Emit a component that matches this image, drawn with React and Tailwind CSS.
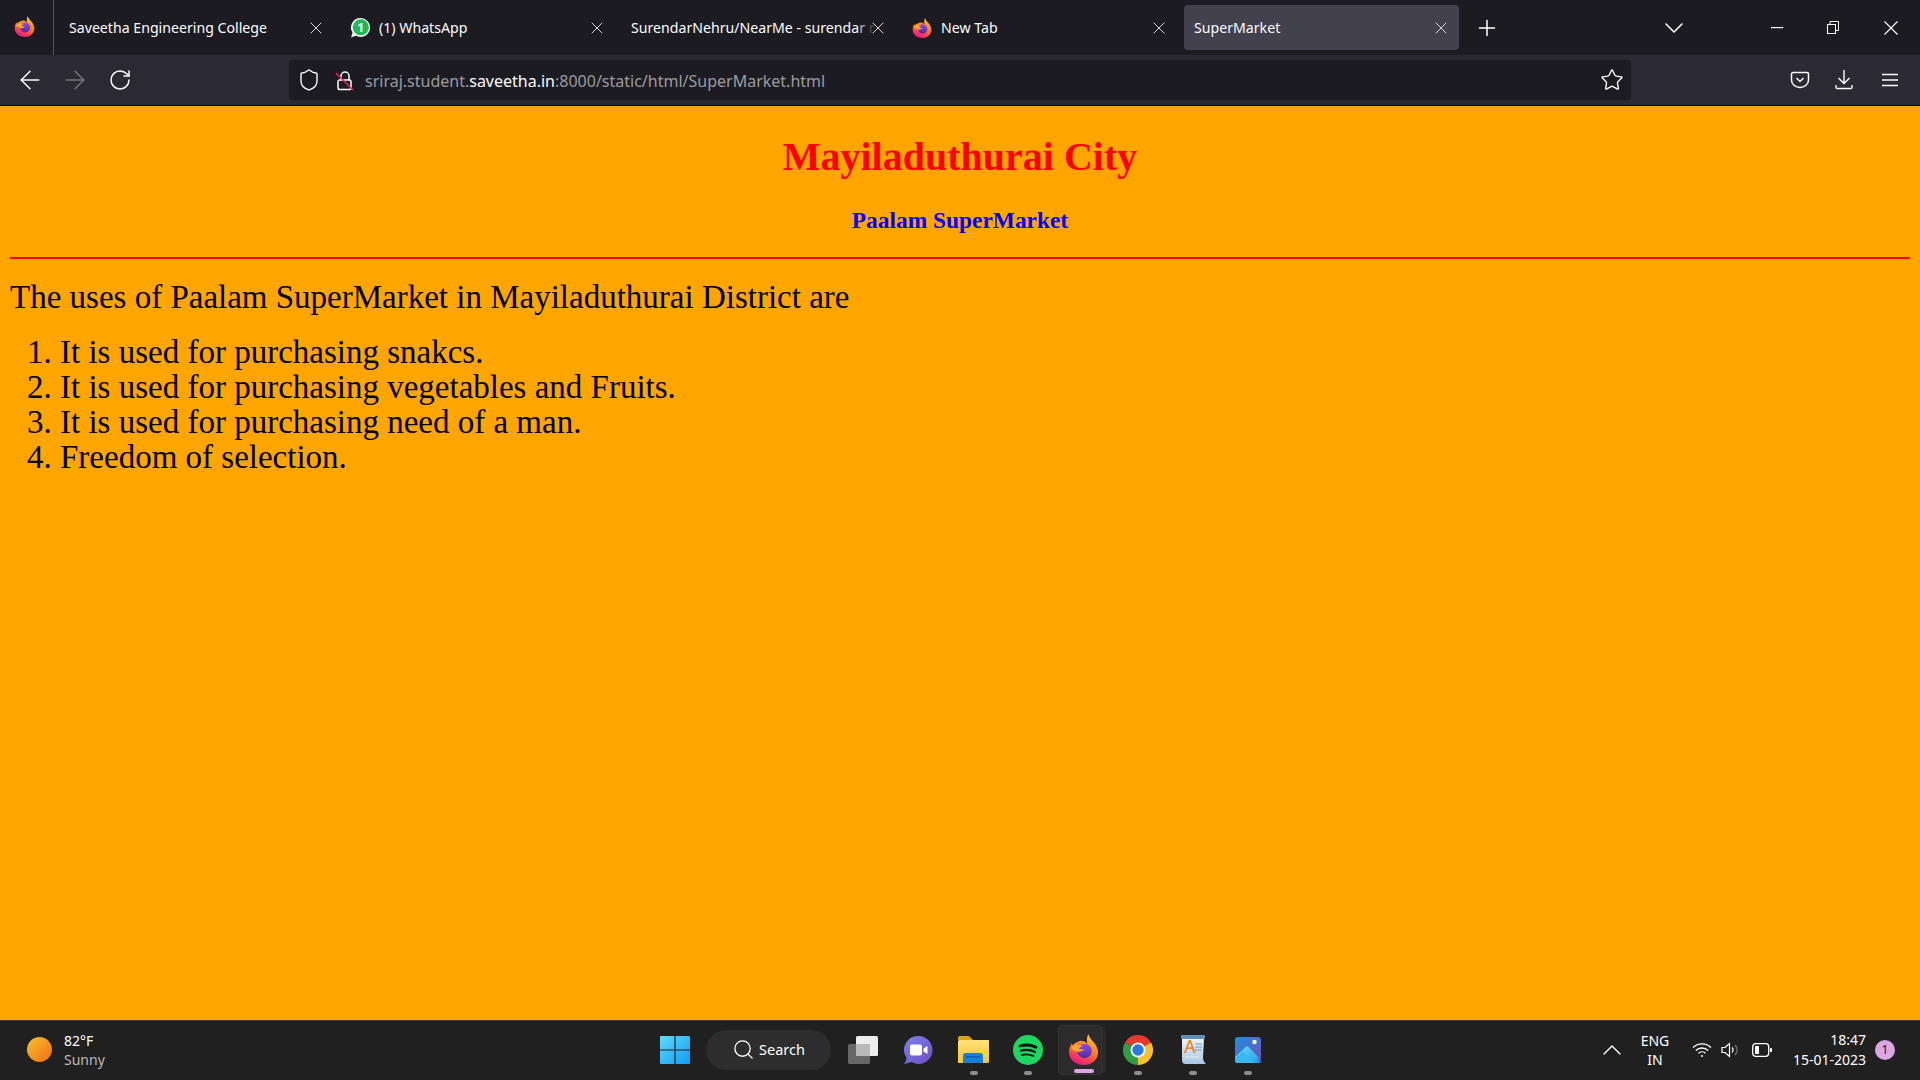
import React from "react";
import {
  ArrowLeft,
  ArrowRight,
  ChevronDown,
  ChevronUp,
  Plus,
  RotateCw,
  Search,
  Shield,
  Star,
  X,
} from "lucide-react";

const uiFont = "font-['Noto_Sans','Open_Sans',sans-serif]";
const pageFont = "font-['Liberation_Serif',serif]";

function FirefoxIcon({ size = 20 }) {
  return (
    <svg width={size} height={size} viewBox="0 0 32 32">
      <defs>
        <linearGradient id="ffBody" x1="0.8" y1="0" x2="0.35" y2="1">
          <stop offset="0" stopColor="#ffd02e" />
          <stop offset="0.5" stopColor="#ff7a1f" />
          <stop offset="0.8" stopColor="#ff3a5a" />
          <stop offset="1" stopColor="#e0168c" />
        </linearGradient>
        <linearGradient id="ffCore" x1="0.5" y1="0" x2="0.5" y2="1">
          <stop offset="0" stopColor="#8f4de8" />
          <stop offset="1" stopColor="#4a2aa6" />
        </linearGradient>
      </defs>
      <path d="M21 0c.5 3 3 5.500 5.500 8.500 2.500 3 4.500 6.500 4.500 10.500 0 7.500-6.500 13-15 13S1 26 1 18c0-3 1-6 3-8.500.5 1.500 1 2.500 2 3 1-3 4-5 7-5.500 3 0 5 1 7 3-1-3.500-.5-7 1-10z" fill="url(#ffBody)" />
      <circle cx="17" cy="17.500" r="7.500" fill="url(#ffCore)" />
      <path d="M3 16c1-3.500 3-6 6-7.500C8 10 8.200 11 9.500 11.500c1.500.5 3.500.5 5.500 0-1 1.500-2.500 2.500-4 3 1 1.500 3.500 2 6 1-1.500 2.500-5 3.500-8 2.500-2-.7-4-1.500-6-2z" fill="#ffa62b" />
    </svg>
  );
}

function WhatsAppIcon() {
  return (
    <svg width="21" height="22" viewBox="0 0 21 22">
      <path d="M10.500 1a9.500 9.500 0 1 1-4.600 17.800L1 20.500l1.500-4.800A9.500 9.500 0 0 1 10.500 1z" fill="#e8f5ee" />
      <circle cx="10.800" cy="10.300" r="8" fill="#1fb954" />
      <text x="10.800" y="14.500" textAnchor="middle" fontSize="12" fontWeight="700" fontFamily="Noto Sans" fill="#fff">
        1
      </text>
    </svg>
  );
}

function Tab({ icon, children, active }) {
  return (
    <div
      className={`mr-[6px] flex h-[45px] w-[275px] shrink-0 items-center rounded-[4px] pl-[10px] pr-[8px] ${
        active ? "ml-[1px] bg-[#42414d]" : ""
      }`}
    >
      {icon && <span className="mr-[7px] flex w-[22px] shrink-0 items-center">{icon}</span>}
      <span className="min-w-0 flex-1 whitespace-nowrap pt-[1px] text-[14.15px] text-[#fbfbfe]">{children}</span>
      <X size={20} strokeWidth={1.2} className="shrink-0 text-[#d5d5da]" />
    </div>
  );
}

function TitleBar() {
  return (
    <div className="flex h-[55px] shrink-0 items-center bg-[#1c1b22] text-white">
      <div className="flex h-full w-[54px] shrink-0 items-center justify-center border-r border-[#55555c] pb-[3px] pr-[4px]">
        <FirefoxIcon size={21} />
      </div>
      <div className="ml-[5px] flex items-center">
        <Tab>Saveetha Engineering College</Tab>
        <Tab icon={<WhatsAppIcon />}>(1) WhatsApp</Tab>
        <Tab>
          SurendarNehru/NearMe - surenda<span className="opacity-70">r</span> <span className="opacity-20">r</span>
        </Tab>
        <Tab icon={<FirefoxIcon size={20} />}>New Tab</Tab>
        <Tab active>SuperMarket</Tab>
      </div>
      <Plus size={26} strokeWidth={1.4} className="ml-[9px] shrink-0" />
      <ChevronDown size={32} strokeWidth={1.2} className="ml-[158px] shrink-0" />
      <div className="ml-auto flex items-center pr-[22px]">
        <svg width="12" height="2" viewBox="0 0 12 2" className="mr-[44px]">
          <rect width="12" height="1.200" fill="#fff" />
        </svg>
        <svg width="12" height="13" viewBox="0 0 12 13" fill="none" stroke="#fff" strokeWidth="1" className="mr-[45px]">
          <rect x="0.500" y="3.500" width="8" height="9" fill="#1c1b22" />
          <path d="M3 3.500V.5h8.500v9H8.500" />
        </svg>
        <svg width="14" height="14" viewBox="0 0 14 14" stroke="#fff" strokeWidth="1.100">
          <path d="M.5.5l13 13M13.500.5l-13 13" />
        </svg>
      </div>
    </div>
  );
}

function ToolBar() {
  return (
    <div className="flex h-[50px] shrink-0 items-center bg-[#2b2a33] text-[#fbfbfe]">
      <ArrowLeft size={30} strokeWidth={1.2} className="ml-[15px] shrink-0" />
      <ArrowRight size={30} strokeWidth={1.2} className="ml-[15px] shrink-0 text-[#75747b]" />
      <RotateCw size={24} strokeWidth={1.5} className="ml-[18px] shrink-0" />
      <div className="ml-[157px] flex h-[40px] w-[1342px] shrink-0 items-center rounded-[4px] bg-[#1c1b22] pl-[8px] pr-[7px]">
        <Shield size={24} strokeWidth={1.4} className="shrink-0" />
        <svg width="20" height="21" viewBox="0 0 20 21" fill="none" className="ml-[14px] shrink-0">
          <path d="M6 10V6a4 4 0 0 1 8 0v4" stroke="#fbfbfe" strokeWidth="1.500" />
          <rect x="3" y="10" width="13" height="9.500" rx="1.800" stroke="#fbfbfe" strokeWidth="1.500" />
          <path d="M1 3l17 17" stroke="#e22850" strokeWidth="1.600" />
        </svg>
        <span className="ml-[10px] whitespace-nowrap pt-[2px] text-[16px] text-[#9b9ba0]">
          sriraj.student.<span className="text-[#fbfbfe]">saveetha.in</span>:8000/static/html/SuperMarket.html
        </span>
        <Star size={24} strokeWidth={1.4} className="ml-auto shrink-0" />
      </div>
      <svg width="20" height="18" viewBox="0 0 20 18" fill="none" stroke="#fbfbfe" strokeWidth="1.500" className="ml-[159px] shrink-0">
        <path d="M3 1.500h14a1.500 1.500 0 0 1 1.500 1.500v6a8.500 7.500 0 0 1-17 0V3A1.500 1.500 0 0 1 3 1.500z" />
        <path d="M6.500 7L10 10.500 13.500 7" />
      </svg>
      <svg width="18" height="20" viewBox="0 0 18 20" fill="none" stroke="#fbfbfe" strokeWidth="1.400" className="ml-[25px] shrink-0">
        <path d="M9 0v13M3.500 8L9 13.500 14.500 8" />
        <path d="M1 15v2.500a1 1 0 0 0 1 1h14a1 1 0 0 0 1-1V15" />
      </svg>
      <svg width="16" height="14" viewBox="0 0 16 14" stroke="#fbfbfe" strokeWidth="1.500" className="ml-[29px] shrink-0">
        <path d="M0 1.500h16M0 7h16M0 12.500h16" />
      </svg>
    </div>
  );
}

function Page() {
  return (
    <main className={`min-h-0 flex-1 border-t border-black bg-[#ffa500] px-[10px] text-black ${pageFont}`}>
      <h1 className="mt-[28px] text-center text-[40px] font-bold leading-[46px] text-[#ff0000]">Mayiladuthurai City</h1>
      <h3 className="mt-[27px] text-center text-[23.4px] font-bold leading-[27px] text-[#0000ff]">Paalam SuperMarket</h3>
      <hr className="mt-[23px] border-0 border-t-2 border-[#ff0000]" />
      <p className="mt-[20px] text-[33px] leading-[36px]">The uses of Paalam SuperMarket in Mayiladuthurai District are</p>
      <ol className="mt-[20px] list-decimal pl-[50px] text-[33px] leading-[35px]">
        <li>It is used for purchasing snakcs.</li>
        <li>It is used for purchasing vegetables and Fruits.</li>
        <li>It is used for purchasing need of a man.</li>
        <li>Freedom of selection.</li>
      </ol>
    </main>
  );
}

// slot: fixed-size taskbar button with its running indicator below the icon
function Slot({ children, dot, className = "" }) {
  return (
    <div className={`relative flex h-[57px] shrink-0 items-center justify-center ${className}`}>
      {children}
      {dot && <span className="absolute bottom-[3px] left-1/2 h-[4px] w-[8px] -translate-x-1/2 rounded-full bg-[#8d8d8d]" />}
    </div>
  );
}

function WindowsLogo() {
  return (
    <svg width="30" height="30" viewBox="0 0 30 30">
      <defs>
        <linearGradient id="winBlue" x1="0" y1="0" x2="1" y2="1">
          <stop offset="0" stopColor="#5fdcfb" />
          <stop offset="1" stopColor="#0f9af5" />
        </linearGradient>
      </defs>
      <path d="M1 1h13.400v13.400H0V2a1 1 0 0 1 1-1zM15.600 1H29a1 1 0 0 1 1 1v12.400H15.600zM0 15.600h14.400V29H1a1 1 0 0 1-1-1zM15.600 15.600H30V28a1 1 0 0 1-1 1H15.600z" fill="url(#winBlue)" />
    </svg>
  );
}

function TaskView() {
  return (
    <svg width="30" height="28" viewBox="0 0 30 28">
      <rect x="8" y="0" width="22" height="20" rx="1.500" fill="#eeeeee" />
      <rect x="0" y="8" width="22" height="20" rx="1.500" fill="#6f6f6f" fillOpacity="0.9" />
      <rect x="8" y="8" width="14" height="12" fill="#b9b9b9" />
    </svg>
  );
}

function ChatIcon() {
  return (
    <svg width="30" height="30" viewBox="0 0 30 30">
      <defs>
        <linearGradient id="chatBg" x1="0" y1="0" x2="1" y2="1">
          <stop offset="0" stopColor="#7b83eb" />
          <stop offset="1" stopColor="#6d4cc4" />
        </linearGradient>
      </defs>
      <path d="M15.500 1a14 14 0 1 1-7 26.100C6.500 28 4 28.500 1 29c1.500-2 2.300-3.800 2.600-6A14 14 0 0 1 15.500 1z" fill="url(#chatBg)" />
      <rect x="7" y="9.500" width="12" height="11" rx="2" fill="#fff" />
      <path d="M20.500 13.500l4-2.500v8l-4-2.500z" fill="#fff" />
    </svg>
  );
}

function FolderIcon() {
  return (
    <svg width="31" height="27" viewBox="0 0 31 27">
      <defs>
        <linearGradient id="folderBg" x1="0" y1="0" x2="0" y2="1">
          <stop offset="0" stopColor="#ffe07a" />
          <stop offset="1" stopColor="#f9c433" />
        </linearGradient>
      </defs>
      <path d="M0 2a2 2 0 0 1 2-2h8c1 0 1.500.5 2.500 1.500L15 4H0z" fill="#dba112" />
      <path d="M0 5.500A1.500 1.500 0 0 1 1.500 4H31v21.500a1.500 1.500 0 0 1-1.500 1.500H0z" fill="url(#folderBg)" />
      <path d="M5 27v-7.500A2.500 2.500 0 0 1 7.500 17h15a2.500 2.500 0 0 1 2.500 2.500V27z" fill="#1580d8" />
      <rect x="8" y="20" width="14" height="1.500" fill="#0d5fae" />
    </svg>
  );
}

function SpotifyIcon() {
  return (
    <svg width="30" height="30" viewBox="0 0 30 30" fill="none" stroke="#111" strokeLinecap="round">
      <circle cx="15" cy="15" r="15" fill="#1ed760" stroke="none" />
      <path d="M7 11c5-1.500 11-1.300 16 1.300" strokeWidth="2.800" />
      <path d="M8 15.700c4.500-1.200 9.700-.9 14 1.300" strokeWidth="2.300" />
      <path d="M9 20c3.800-1 8-.8 11.500 1" strokeWidth="1.900" />
    </svg>
  );
}

function ChromeIcon() {
  return (
    <svg width="30" height="30" viewBox="0 0 30 30">
      <path d="M15 15L2 7.500A15 15 0 0 1 28 7.500z" fill="#e33b2e" />
      <path d="M15 15L28 7.500A15 15 0 0 1 15 30z" fill="#fbc02d" />
      <path d="M15 15L15 30A15 15 0 0 1 2 7.500z" fill="#2f9e44" />
      <circle cx="15" cy="15" r="7.500" fill="#fff" />
      <circle cx="15" cy="15" r="5.700" fill="#2a78e4" />
    </svg>
  );
}

function WordpadIcon() {
  return (
    <svg width="26" height="29" viewBox="0 0 26 29">
      <defs>
        <linearGradient id="padBg" x1="0" y1="0" x2="0" y2="1">
          <stop offset="0" stopColor="#f2f7fc" />
          <stop offset="1" stopColor="#a9c6e2" />
        </linearGradient>
      </defs>
      <path d="M2 3h22l-1 20c0 3 2 5 3 6H5c-2 0-3-2-3-4z" fill="url(#padBg)" />
      <rect x="1" y="0" width="24" height="4" rx="1" fill="#5f8fb5" />
      <text x="4" y="18" fontSize="18" fontFamily="Noto Sans" fontWeight="500" fill="#f0862a">
        A
      </text>
      <path d="M15 9h7M15 12h7M15 15h7" stroke="#5f9ed4" strokeWidth="1.200" />
      <path d="M5 22h14" stroke="#dfe8f0" strokeWidth="1.200" />
    </svg>
  );
}

function PhotosIcon() {
  return (
    <svg width="26" height="26" viewBox="0 0 26 26">
      <defs>
        <linearGradient id="phBg" x1="0" y1="0" x2="1" y2="1">
          <stop offset="0" stopColor="#1a8fe3" />
          <stop offset="1" stopColor="#7a4fb8" />
        </linearGradient>
        <linearGradient id="phPeak" x1="0" y1="0" x2="1" y2="1">
          <stop offset="0" stopColor="#6ae0fb" />
          <stop offset="1" stopColor="#1f9ee8" />
        </linearGradient>
      </defs>
      <rect width="26" height="26" rx="3" fill="url(#phBg)" />
      <circle cx="19.500" cy="5" r="2.300" fill="#eef6ff" />
      <path d="M13 26l5-8 8 6v.5a1.500 1.500 0 0 1-1.500 1.500z" fill="#2a6fc4" />
      <path d="M0 20L10.500 10c1-1 2-1 3 0L23 19.500 24 26H3a3 3 0 0 1-3-3z" fill="url(#phPeak)" />
      <path d="M0 22L8 14.500 19 26H3a3 3 0 0 1-3-3z" fill="#38b8ee" />
    </svg>
  );
}

function TaskBar() {
  return (
    <footer className={`flex h-[60px] shrink-0 items-center border-t border-[#3a3a3a] bg-[#202020] pb-[2px] text-white ${uiFont}`}>
      <div className="flex w-[660px] shrink-0 items-center pl-[27px]">
        <span className="h-[25px] w-[25px] rounded-full bg-gradient-to-br from-[#f5c02e] to-[#ef6c10]" />
        <div className="ml-[12px] flex flex-col">
          <span className="text-[14px] leading-[19px]">82°F</span>
          <span className="text-[14px] leading-[19px] text-[#b9b9b9]">Sunny</span>
        </div>
      </div>
      <Slot className="w-[30px]"><WindowsLogo /></Slot>
      <div className="ml-[16px] flex h-[40px] w-[125px] shrink-0 items-center justify-center rounded-full bg-[#2d2d2d]">
        <Search size={23} strokeWidth={1.4} />
        <span className="ml-[4px] text-[14.5px]">Search</span>
      </div>
      <Slot className="ml-[17px] w-[30px]"><TaskView /></Slot>
      <Slot className="ml-[25px] w-[30px]"><ChatIcon /></Slot>
      <Slot dot className="ml-[25px] w-[31px]"><FolderIcon /></Slot>
      <Slot dot className="ml-[24px] w-[30px]"><SpotifyIcon /></Slot>
      <div className="relative ml-[15px] flex h-[50px] w-[44px] shrink-0 items-center justify-center rounded-[4px] border border-[#333] bg-[#2b2b2b] pl-[6px] shadow-[6px_0_0_-2px_#2a2a2a]">
        <FirefoxIcon size={31} />
        <span className="absolute bottom-[1px] left-[15px] h-[4px] w-[20px] rounded-full bg-[#dca5e6]" />
      </div>
      <Slot dot className="ml-[21px] w-[30px]"><ChromeIcon /></Slot>
      <Slot dot className="ml-[27px] w-[26px]"><WordpadIcon /></Slot>
      <Slot dot className="ml-[29px] w-[26px]"><PhotosIcon /></Slot>

      <ChevronUp size={32} strokeWidth={1} className="ml-[335px] shrink-0" />
      <div className="ml-[11px] flex w-[32px] shrink-0 flex-col items-center text-[14px] leading-[19px]">
        <span>ENG</span>
        <span>IN</span>
      </div>
      <svg width="20" height="16" viewBox="0 0 20 16" fill="none" stroke="#fff" strokeWidth="1.400" className="ml-[21px] shrink-0">
        <path d="M1 5.500a13 13 0 0 1 18 0M3.800 8.500a9 9 0 0 1 12.400 0M6.500 11.300a5 5 0 0 1 7 0" />
        <circle cx="10" cy="14" r="1" fill="#fff" stroke="none" />
      </svg>
      <svg width="20" height="16" viewBox="0 0 20 16" fill="none" stroke="#fff" strokeWidth="1.200" className="ml-[9px] shrink-0">
        <path d="M1 5.500h3L8.500 1.500v13L4 10.500H1z" />
        <path d="M11 5.500a3.500 3.500 0 0 1 0 5" />
        <path d="M14 3a7 7 0 0 1 0 10" stroke="#777" />
      </svg>
      <svg width="20" height="14" viewBox="0 0 20 14" fill="none" className="ml-[11px] shrink-0">
        <rect x="0.700" y="0.700" width="16" height="12.600" rx="3" stroke="#fff" strokeWidth="1.300" />
        <rect x="3" y="3" width="4" height="8" rx="0.800" fill="#fff" />
        <rect x="18" y="5" width="2" height="4" rx="0.800" fill="#fff" />
      </svg>
      <div className="ml-auto flex items-center pr-[25px]">
        <div className="flex flex-col items-end text-[14px] leading-[20px]">
          <span>18:47</span>
          <span>15-01-2023</span>
        </div>
        <span className="ml-[9px] flex h-[20px] w-[20px] items-center justify-center rounded-full bg-[#dca5e6] text-[12px] text-[#222]">1</span>
      </div>
    </footer>
  );
}

export default function App() {
  return (
    <div className={`flex h-screen w-full flex-col overflow-hidden ${uiFont}`}>
      <TitleBar />
      <ToolBar />
      <Page />
      <TaskBar />
    </div>
  );
}
